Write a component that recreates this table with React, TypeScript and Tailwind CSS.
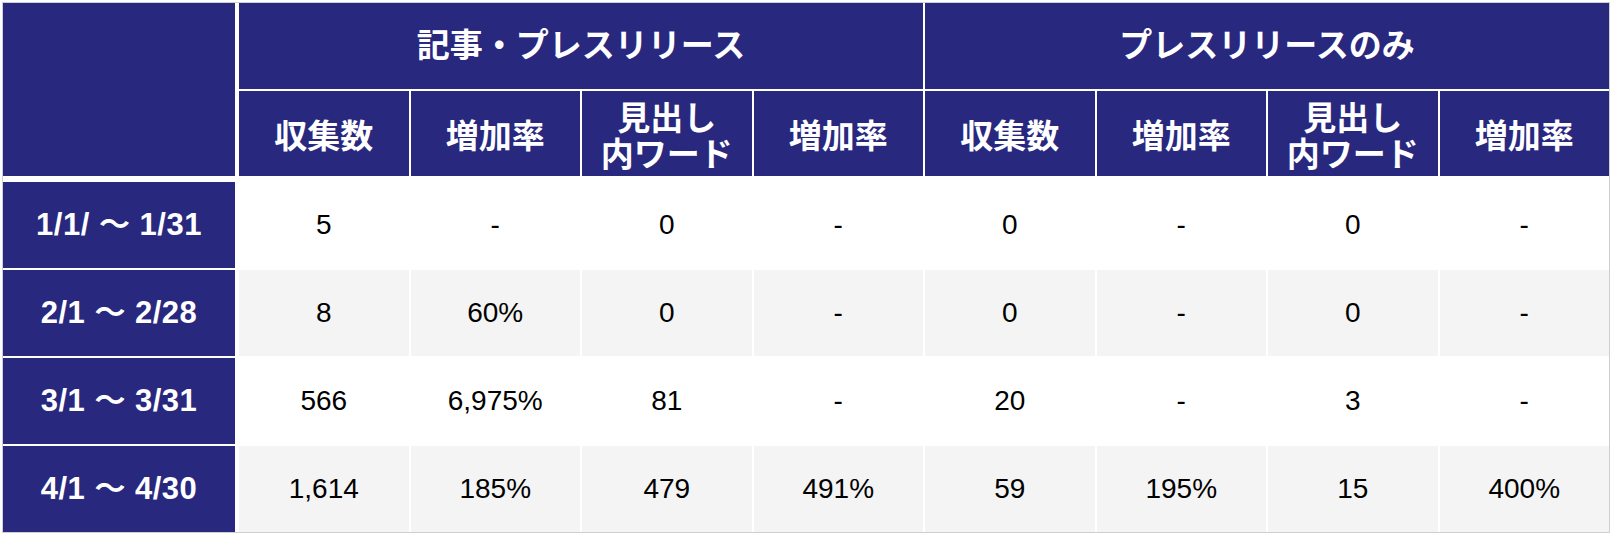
const NAVY = "bg-[#29287f]";

const subHeaders = ["収集数", "増加率", "見出し\n内ワード", "増加率", "収集数", "増加率", "見出し\n内ワード", "増加率"];

const rows: { label: string; values: string[] }[] = [
  { label: "1/1/ ～ 1/31", values: ["5", "-", "0", "-", "0", "-", "0", "-"] },
  { label: "2/1 ～ 2/28", values: ["8", "60%", "0", "-", "0", "-", "0", "-"] },
  { label: "3/1 ～ 3/31", values: ["566", "6,975%", "81", "-", "20", "-", "3", "-"] },
  { label: "4/1 ～ 4/30", values: ["1,614", "185%", "479", "491%", "59", "195%", "15", "400%"] },
];

const cols = "grid grid-cols-[234px_repeat(8,minmax(0,1fr))] gap-[2px]";

export default function App() {
  return (
    <div className="min-h-screen bg-white pl-[2px] pt-[2px]">
      <div className="flex w-[1608px] flex-col gap-[6px] border border-[#cfcfcf] bg-white">
        {/* header */}
        <div
          className={`${cols} grid-rows-[86px_85px] font-['Noto_Sans_CJK_JP',sans-serif] text-[33px] font-bold text-white`}
        >
          <div className={`${NAVY} row-span-2 mr-[2px]`} />
          <div className={`${NAVY} col-span-4 flex items-center justify-center pb-[4px]`}>
            記事・プレスリリース
          </div>
          <div className={`${NAVY} col-span-4 flex items-center justify-center pb-[4px]`}>
            プレスリリースのみ
          </div>
          {subHeaders.map((h, i) => (
            <div
              key={i}
              className={`${NAVY} flex items-center justify-center whitespace-pre-line text-center leading-[36px]`}
            >
              {h}
            </div>
          ))}
        </div>

        {/* body */}
        <div className={`${cols} auto-rows-[86px]`}>
          {rows.map((row, r) => (
            <div key={row.label} className="contents">
              <div
                className={`${NAVY} mr-[2px] flex items-center justify-center font-['Liberation_Sans','Noto_Sans_CJK_JP',sans-serif] text-[31px] font-bold tracking-[0.5px] text-white`}
              >
                {row.label}
              </div>
              {row.values.map((v, i) => (
                <div
                  key={i}
                  className={`flex items-center justify-center font-['Liberation_Sans',sans-serif] text-[28px] text-black ${
                    r % 2 === 1 ? "bg-[#f4f4f4]" : "bg-white"
                  }`}
                >
                  {v}
                </div>
              ))}
            </div>
          ))}
        </div>
      </div>
    </div>
  );
}
